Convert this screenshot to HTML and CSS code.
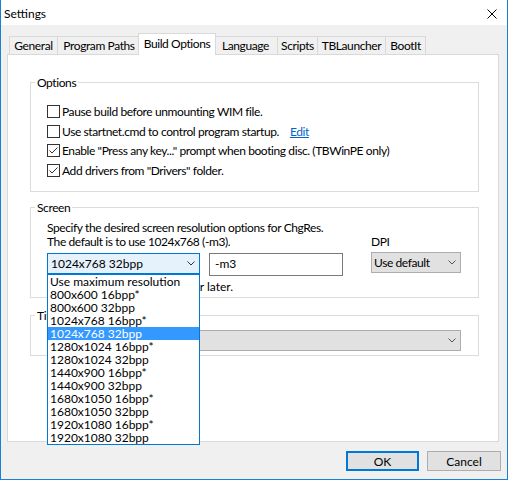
FILE: index.html
```html
<!DOCTYPE html>
<html>
<head>
<meta charset="utf-8">
<title>Settings</title>
<link rel="stylesheet" href="styles.css">
</head>
<body>
<div class="window">
  <div class="titlebar">
    <span class="title">Settings</span>
    <svg class="close" viewBox="0 0 10 10" width="10" height="10"><path d="M0.5 0.5 L9.5 9.5 M9.5 0.5 L0.5 9.5" stroke="#000" stroke-width="1" fill="none"/></svg>
  </div>
  <div class="client">
    <div class="tabs">
      <div class="tab w-general">General</div>
      <div class="tab w-paths">Program Paths</div>
      <div class="tab active w-build">Build Options</div>
      <div class="tab w-lang">Language</div>
      <div class="tab w-scripts">Scripts</div>
      <div class="tab w-tbl">TBLauncher</div>
      <div class="tab w-boot">BootIt</div>
    </div>
    <div class="panel">
      <fieldset class="group g-options">
        <legend>Options</legend>
        <div class="options-body">
          <div class="check-row">
            <svg class="box" viewBox="0 0 13 13" width="13" height="13"><rect x="0.5" y="0.5" width="12" height="12" fill="#fff" stroke="#333"/></svg>
            <span>Pause build before unmounting WIM file.</span>
          </div>
          <div class="check-row">
            <svg class="box" viewBox="0 0 13 13" width="13" height="13"><rect x="0.5" y="0.5" width="12" height="12" fill="#fff" stroke="#333"/></svg>
            <span>Use startnet.cmd to control program startup.</span>
            <span class="link">Edit</span>
          </div>
          <div class="check-row">
            <svg class="box" viewBox="0 0 13 13" width="13" height="13"><rect x="0.5" y="0.5" width="12" height="12" fill="#fff" stroke="#333"/><polyline points="2.5,6.5 5,9 10.5,3.5" fill="none" stroke="#333" stroke-width="1"/></svg>
            <span>Enable "Press any key..." prompt when booting disc. (TBWinPE only)</span>
          </div>
          <div class="check-row">
            <svg class="box" viewBox="0 0 13 13" width="13" height="13"><rect x="0.5" y="0.5" width="12" height="12" fill="#fff" stroke="#333"/><polyline points="2.5,6.5 5,9 10.5,3.5" fill="none" stroke="#333" stroke-width="1"/></svg>
            <span>Add drivers from "Drivers" folder.</span>
          </div>
        </div>
      </fieldset>

      <fieldset class="group g-screen">
        <legend>Screen</legend>
        <div class="screen-body">
          <div class="line">Specify the desired screen resolution options for ChgRes.</div>
          <div class="row-b">
            <div class="line line2">The default is to use 1024x768 (-m3).</div>
            <div class="line">DPI</div>
          </div>
          <div class="row-c">
            <div class="combo open">
              <span class="val">1024x768 32bpp</span>
              <svg class="chev" viewBox="0 0 8 5" width="8" height="5"><polyline points="0.5,0.5 4,4 7.5,0.5" fill="none" stroke="#333" stroke-width="1"/></svg>
              <div class="dropdown">
                <div class="item">Use maximum resolution</div>
                <div class="item">800x600 16bpp*</div>
                <div class="item">800x600 32bpp</div>
                <div class="item">1024x768 16bpp*</div>
                <div class="item sel">1024x768 32bpp</div>
                <div class="item">1280x1024 16bpp*</div>
                <div class="item">1280x1024 32bpp</div>
                <div class="item">1440x900 16bpp*</div>
                <div class="item">1440x900 32bpp</div>
                <div class="item">1680x1050 16bpp*</div>
                <div class="item">1680x1050 32bpp</div>
                <div class="item">1920x1080 16bpp*</div>
                <div class="item">1920x1080 32bpp</div>
              </div>
            </div>
            <div class="text-input">-m3</div>
            <div class="combo select dpi-select">
              <span>Use default</span>
              <svg class="chev" viewBox="0 0 8 5" width="8" height="5"><polyline points="0.5,0.5 4,4 7.5,0.5" fill="none" stroke="#555" stroke-width="1"/></svg>
            </div>
          </div>
          <div class="line note">Requires Windows 8.1 or later.</div>
        </div>
      </fieldset>

      <fieldset class="group g-third">
        <legend>Time zone</legend>
        <div class="third-body">
          <div class="combo select wide-select">
            <span></span>
            <svg class="chev" viewBox="0 0 8 5" width="8" height="5"><polyline points="0.5,0.5 4,4 7.5,0.5" fill="none" stroke="#555" stroke-width="1"/></svg>
          </div>
        </div>
      </fieldset>
    </div>
    <div class="footer">
      <div class="btn btn-ok">OK</div>
      <div class="btn btn-cancel">Cancel</div>
    </div>
  </div>
</div>
</body>
</html>
```
FILE: styles.css
```css
html, body {
  margin: 0;
  padding: 0;
}
body {
  font-family: Lato, "Noto Sans", "Liberation Sans", sans-serif;
  font-size: 12px;
  letter-spacing: -0.4px;
  color: #000;
  background: #fff;
}
.window {
  width: 508px;
  height: 480px;
  box-sizing: border-box;
  border: 1px solid #1a7fd5;
  border-top: none;
  background: #f0f0f0;
  display: flex;
  flex-direction: column;
}
.titlebar {
  height: 25px;
  box-sizing: border-box;
  background: #fff;
  display: flex;
  align-items: flex-start;
  padding: 6px 10px 0 3px;
}
.title {
  line-height: 15px;
  letter-spacing: 0;
}
.close {
  margin-left: auto;
  margin-top: 3px;
  display: block;
}
.client {
  flex: 1;
  display: flex;
  flex-direction: column;
  padding-top: 8px;
}
.tabs {
  display: flex;
  align-items: flex-end;
  height: 21px;
  margin-left: 8px;
}
.tab {
  height: 18px;
  box-sizing: border-box;
  border: 1px solid #d9d9d9;
  border-bottom: none;
  background: #f0f0f0;
  display: flex;
  align-items: center;
  justify-content: center;
  margin-right: -1px;
  line-height: 14px;
  white-space: nowrap;
}
.tab.active {
  height: 22px;
  background: #fff;
  margin-left: -2px;
  margin-right: -3px;
  margin-bottom: -1px;
  padding-bottom: 2px;
  position: relative;
  z-index: 1;
}
.w-general { width: 49px; }
.w-paths { width: 84px; }
.w-build { width: 78px; }
.w-lang { width: 65px; }
.w-scripts { width: 41px; }
.w-tbl { width: 69px; }
.w-boot { width: 41px; }

.panel {
  margin-left: 6px;
  width: 492px;
  height: 388px;
  box-sizing: border-box;
  background: #fff;
  border: 1px solid #d9d9d9;
  padding: 0 19px 0 22px;
}
.group {
  margin: 0;
  padding: 0;
  border: 1px solid #dcdcdc;
  min-width: 0;
}
.group legend {
  margin-left: 4px;
  padding: 0 2px;
  line-height: 15px;
}
.g-options { margin-top: 20px; }
.options-body {
  padding: 12px 0 11px 16px;
}
.check-row {
  display: flex;
  align-items: center;
  height: 19.5px;
  white-space: nowrap;
}
.box {
  display: block;
  margin-right: 2px;
  flex: none;
}
.link {
  color: #0066cc;
  text-decoration: underline;
  margin-left: 11px;
}

.g-screen { margin-top: 8px; }
.screen-body {
  padding: 6px 0 3px 16px;
}
.line {
  line-height: 14px;
  white-space: nowrap;
}
.row-b {
  display: flex;
}
.line2 { width: 324px; }
.row-c {
  display: flex;
  align-items: flex-start;
  margin-top: 4px;
}
.combo {
  width: 153px;
  height: 21px;
  box-sizing: border-box;
  display: flex;
  align-items: center;
  padding-left: 3px;
  position: relative;
}
.combo.open {
  border: 1px solid #0078d7;
  background: #e5f1fb;
  letter-spacing: 0;
}
.chev {
  display: block;
  margin-left: auto;
  margin-right: 4px;
}
.select {
  border: 1px solid #adadad;
  background: #e1e1e1;
}
.dpi-select {
  width: 90px;
  margin-left: 28px;
  margin-top: -1px;
  padding-left: 2px;
}
.text-input {
  margin-left: 9px;
  width: 134px;
  height: 23px;
  box-sizing: border-box;
  border: 1px solid #7a7a7a;
  background: #fff;
  padding-left: 5px;
  display: flex;
  align-items: center;
  padding-bottom: 2px;
  letter-spacing: 0;
}
.note {
  margin-top: 4px;
  width: 186px;
  text-align: right;
  letter-spacing: 0;
}
.dropdown {
  position: absolute;
  left: -1px;
  top: calc(100% + 1px);
  width: 153px;
  box-sizing: border-box;
  border: 1px solid #0078d7;
  background: #fff;
  z-index: 5;
  letter-spacing: 0;
}
.item {
  height: 13px;
  line-height: 13px;
  padding-left: 2px;
  white-space: nowrap;
}
.item.sel {
  background: #3399ff;
  color: #fff;
}

.g-third { margin-top: 10px; }
.third-body {
  padding: 7px 0 4px 16px;
}
.wide-select {
  width: 414px;
}

.footer {
  display: flex;
  justify-content: flex-end;
  gap: 8px;
  margin-top: 9px;
  padding-right: 6px;
}
.btn {
  height: 20px;
  box-sizing: border-box;
  background: #e1e1e1;
  border: 1px solid #adadad;
  display: flex;
  align-items: center;
  justify-content: center;
  letter-spacing: 0;
}
.btn-ok {
  width: 73px;
  border: 2px solid #0078d7;
}
.btn-cancel {
  width: 74px;
}
```
